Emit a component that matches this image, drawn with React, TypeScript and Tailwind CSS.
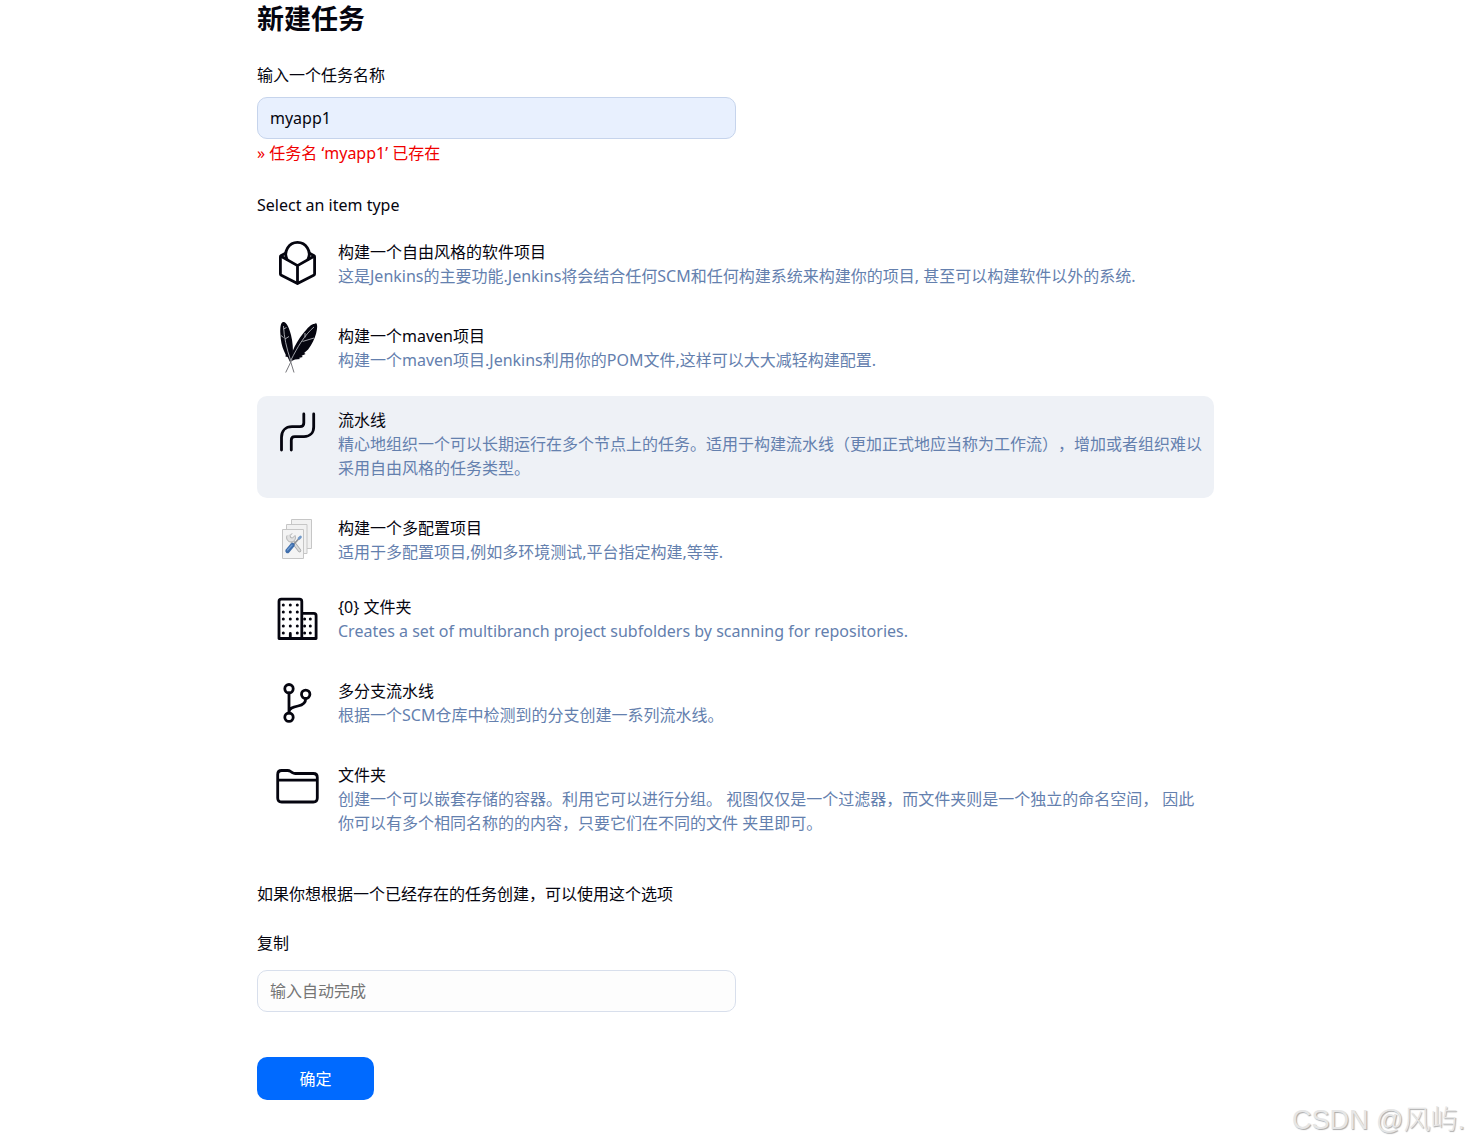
import React, { useState } from 'react';

interface ItemType {
  id: string;
  title: string;
  description: string;
  icon: React.ReactNode;
  compact?: boolean;
}

const LineIcon: React.FC<{ children: React.ReactNode }> = ({ children }) => (
  <svg
    viewBox="0 0 48 48"
    className="size-12 overflow-visible"
    fill="none"
    stroke="currentColor"
    strokeWidth="2.8"
    strokeLinecap="round"
    strokeLinejoin="round"
    aria-hidden="true"
  >
    {children}
  </svg>
);

const FreestyleIcon = () => (
  <LineIcon>
    <path d="M12.5 13.3 8.3 15.5c-.6.3-.9.8-.9 1.4v17c0 .6.3 1.1.9 1.4l16.2 8.2 16.2-8.2c.6-.3.9-.8.9-1.4v-17c0-.6-.3-1.1-.9-1.4L36.500 13.300" />
    <path d="M8 16.300 24.500 25.600 41 16.300M24.500 25.600V43" />
    <path d="M14 19.300A11.700 11.700 0 1 1 35 19.300" />
  </LineIcon>
);

const MavenIcon = () => (
  <svg viewBox="0 0 48 48" className="size-12 overflow-visible" fill="none" aria-hidden="true">
    <path
      d="M10-2c-2.400.8-3 6-2.600 12 .3 7 1.400 12 3.600 17l1.800 4-.4 1.600 2.200.4 2.400 5 2-4 .9-3c.2-6-.1-13-1.900-20C16.400 4.500 13.400-3 10-2Z"
      fill="currentColor"
    />
    <path
      d="M42.500-.2c-3.400-.8-7.500 3.600-12 9.200-5 6.200-8.500 12-11 18.500l-1.500 9.700 4-1.600 5.400-.7-1.600-1 4-1-1.200-1.200 4-1.800-1.500-1 4-3.400c4-5.500 6.500-10.500 8-16 1.400-5 1.700-9.900-.6-10.700Z"
      fill="currentColor"
    />
    <path d="M10.500 2c.5 11 3 22 7 34M10.500 5 13.500 3.500M10.500 13.500 8 11.500M12 15l4-2.500M41 3C31.500 11 24 24 18 36M32 13.500V9M29.500 17.500 41 14" stroke="#c9cbd0" strokeWidth=".8" />
    <path d="M17 35.500 21 48.500M19 35.500 12.700 48.500" stroke="#77777c" strokeWidth="1" />
  </svg>
);

const PipelineIcon = () => (
  <LineIcon>
    <path d="M8.500 42V29.500C8.500 23 12.500 18.700 19 18.700h8c2.600 0 3.800-1.200 3.800-3.700V6" />
    <path d="M18.300 42V32c0-2.300 1.200-3.400 3.500-3.400H31c6 0 9.700-4 9.700-9.700V6" />
  </LineIcon>
);

const MatrixIcon = () => (
  <svg viewBox="0 0 48 48" className="size-12" fill="none" aria-hidden="true">
    <g fill="#f1f1f1" stroke="#c6c6c6" strokeWidth="1">
      <path d="M18.500 3.500h20v29h-20z" />
      <path d="M13.500 8.500h20.500v29H13.500z" />
      <path d="M9.500 13.500h21v29h-21z" fill="#f4f4f4" />
    </g>
    <path d="m18.500 24 8 10.500" stroke="#a9aaab" strokeWidth="3.600" strokeLinecap="round" />
    <path d="m18.500 24 8 10.500" stroke="#dcdddd" strokeWidth="2" strokeLinecap="round" />
    <path
      d="M14 19.500c-1.300 3 .7 6.500 4 6.500 3.400 0 5.500-3.500 4-6.500L19.500 22l-2-.5-.3-2 2-2.200"
      fill="#e2e2e2"
      stroke="#a9aaab"
      strokeWidth=".9"
    />
    <path d="m20 29 7-7.500" stroke="#8c9096" strokeWidth="1.600" />
    <path d="m26 22.500 1.500-1.500" stroke="#739ac9" strokeWidth="2.600" strokeLinecap="round" />
    <path d="m14.500 35 5-6" stroke="#3e6dab" strokeWidth="4.400" strokeLinecap="round" />
    <path d="m14.500 34 4.500-5" stroke="#6d9bd3" strokeWidth="1.200" strokeLinecap="round" />
  </svg>
);

const OrganizationIcon = () => (
  <LineIcon>
    <path d="M6 43.500V6.500c0-1.500.8-2.300 2.300-2.300h18.200c1.500 0 2.300.8 2.300 2.300v37M28.800 18.400h12c1.500 0 2.300.8 2.300 2.300v22.800M6 43.500h37.100M17.300 43V38.500" />
    <path
      d="M10.300 10h.01M17.300 10h.01M24.300 10h.01M10.300 17h.01M17.300 17h.01M24.300 17h.01M10.300 24h.01M17.300 24h.01M24.300 24h.01M10.300 31h.01M17.300 31h.01M24.300 31h.01M10.300 38h.01M24.300 38h.01M31.600 24h.01M37.300 24h.01M31.600 31h.01M37.300 31h.01M31.600 38h.01M37.300 38h.01"
      strokeWidth="3"
    />
  </LineIcon>
);

const BranchIcon = () => (
  <LineIcon>
    <circle cx="16" cy="9.700" r="4.200" />
    <circle cx="32.700" cy="15.300" r="4.200" />
    <circle cx="16" cy="38.200" r="4.200" />
    <path d="M16 14v20M32.700 19.500c0 4.500-2.700 6.500-7.700 7.500s-9 2-9 6" />
  </LineIcon>
);

const FolderIcon = () => (
  <LineIcon>
    <path d="M4.700 35V11.500c0-2.500 1.500-4 4-4h5.800c1.200 0 2 .2 3 .9l1.800 1.200c.9.600 1.700.9 2.900.9h18.100c2.500 0 4 1.500 4 4V35c0 2.500-1.500 4-4 4H8.700c-2.500 0-4-1.500-4-4ZM4.700 17.200h39.600" />
  </LineIcon>
);

const ITEM_TYPES: ItemType[] = [
  {
    id: 'freestyle',
    title: '构建一个自由风格的软件项目',
    description: '这是Jenkins的主要功能.Jenkins将会结合任何SCM和任何构建系统来构建你的项目, 甚至可以构建软件以外的系统.',
    icon: <FreestyleIcon />,
  },
  {
    id: 'maven',
    title: '构建一个maven项目',
    description: '构建一个maven项目.Jenkins利用你的POM文件,这样可以大大减轻构建配置.',
    icon: <MavenIcon />,
  },
  {
    id: 'pipeline',
    title: '流水线',
    description: '精心地组织一个可以长期运行在多个节点上的任务。适用于构建流水线（更加正式地应当称为工作流），增加或者组织难以采用自由风格的任务类型。',
    icon: <PipelineIcon />,
  },
  {
    id: 'matrix',
    title: '构建一个多配置项目',
    description: '适用于多配置项目,例如多环境测试,平台指定构建,等等.',
    icon: <MatrixIcon />,
    compact: true,
  },
  {
    id: 'organization',
    title: '{0} 文件夹',
    description: 'Creates a set of multibranch project subfolders by scanning for repositories.',
    icon: <OrganizationIcon />,
  },
  {
    id: 'multibranch',
    title: '多分支流水线',
    description: '根据一个SCM仓库中检测到的分支创建一系列流水线。',
    icon: <BranchIcon />,
  },
  {
    id: 'folder',
    title: '文件夹',
    description: '创建一个可以嵌套存储的容器。利用它可以进行分组。 视图仅仅是一个过滤器，而文件夹则是一个独立的命名空间， 因此你可以有多个相同名称的的内容，只要它们在不同的文件 夹里即可。',
    icon: <FolderIcon />,
  },
];

const App: React.FC = () => {
  const [name, setName] = useState('myapp1');
  const [copyFrom, setCopyFrom] = useState('');
  const [selected, setSelected] = useState('pipeline');

  return (
    <div className="relative min-h-screen bg-white pl-0.5 pb-11 font-['Noto_Sans','Noto_Sans_CJK_SC',sans-serif] text-base text-[#05050f] [text-spacing-trim:space-all]">
      <form className="mx-auto max-w-[957px]" onSubmit={(e) => e.preventDefault()}>
        <h1 className="text-[27px] leading-[38px] font-bold">新建任务</h1>

        <label htmlFor="name" className="mt-[25px] block">输入一个任务名称</label>
        <input
          id="name"
          type="text"
          value={name}
          onChange={(e) => setName(e.target.value)}
          className="mt-2.5 block h-[42px] w-1/2 rounded-[10px] border border-[#c6d4ec] bg-[#e8f0fe] px-3 outline-none"
        />
        {name === 'myapp1' && (
          <p className="mt-0.5 text-[#f00000]">» 任务名 ‘myapp1’ 已存在</p>
        )}

        <fieldset className="mt-7">
          <legend>Select an item type</legend>
          <div className="mt-[11px] flex flex-col gap-1.5">
            {ITEM_TYPES.map((item) => (
              <label
                key={item.id}
                className={`relative flex cursor-pointer items-start gap-[17px] rounded-[10px] pt-3 pr-2 pl-4 ${
                  item.compact ? 'pb-[13px]' : 'pb-[18px]'
                } ${selected === item.id ? 'bg-[#eef1f6]' : ''}`}
              >
                <input
                  type="radio"
                  name="mode"
                  value={item.id}
                  checked={selected === item.id}
                  onChange={() => setSelected(item.id)}
                  className="sr-only"
                />
                <span className="h-12 w-12 shrink-0">{item.icon}</span>
                <span className="min-w-0 flex-1">
                  <span className="block">{item.title}</span>
                  <span className="block text-[#6480ae]">{item.description}</span>
                </span>
              </label>
            ))}
          </div>
        </fieldset>

        <p className="mt-[29px]">如果你想根据一个已经存在的任务创建，可以使用这个选项</p>
        <label htmlFor="from" className="mt-[25px] block">复制</label>
        <input
          id="from"
          type="text"
          value={copyFrom}
          placeholder="输入自动完成"
          onChange={(e) => setCopyFrom(e.target.value)}
          className="mt-[15px] block h-[42px] w-1/2 rounded-[10px] border border-[#d8dfec] bg-[#fdfdfd] px-3 outline-none placeholder:text-[#757575]"
        />

        <button type="submit" className="mt-[45px] h-[43px] w-[117px] rounded-[10px] bg-[#006aff] text-white">
          确定
        </button>
      </form>

      <div className="absolute right-1 bottom-1 font-['Liberation_Sans','Noto_Sans_CJK_SC',sans-serif] text-[27px] leading-11 font-light text-[#e6e6e6] [text-shadow:1px_1px_1px_#aaa]">
        CSDN @风屿.
      </div>
    </div>
  );
};

export default App;
